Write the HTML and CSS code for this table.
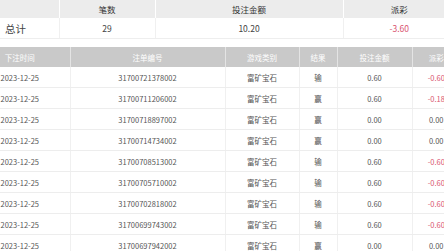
FILE: index.html
```html
<!DOCTYPE html>
<html lang="zh-CN">
<head>
<meta charset="utf-8">
<title>投注记录</title>
<link rel="stylesheet" href="styles.css">
</head>
<body>
<div class="page">
  <table class="summary">
    <colgroup><col class="s1"><col class="s2"><col class="s3"><col class="s4"></colgroup>
    <thead>
      <tr><th></th><th>笔数</th><th>投注金额</th><th>派彩</th></tr>
    </thead>
    <tbody>
      <tr><td class="label">总计</td><td>29</td><td>10.20</td><td class="neg">-3.60</td></tr>
    </tbody>
  </table>
  <div class="scroller">
    <table class="records">
      <colgroup><col class="c1"><col class="c2"><col class="c3"><col class="c4"><col class="c5"><col class="c6"></colgroup>
      <thead>
        <tr><th>下注时间</th><th>注单编号</th><th>游戏类别</th><th>结果</th><th>投注金额</th><th>派彩</th></tr>
      </thead>
      <tbody>
        <tr><td>2023-12-25</td><td>31700721378002</td><td>富矿宝石</td><td>输</td><td>0.60</td><td class="neg">-0.60</td></tr>
        <tr><td>2023-12-25</td><td>31700711206002</td><td>富矿宝石</td><td>赢</td><td>0.60</td><td class="neg">-0.18</td></tr>
        <tr><td>2023-12-25</td><td>31700718897002</td><td>富矿宝石</td><td>赢</td><td>0.00</td><td>0.00</td></tr>
        <tr><td>2023-12-25</td><td>31700714734002</td><td>富矿宝石</td><td>赢</td><td>0.00</td><td>0.00</td></tr>
        <tr><td>2023-12-25</td><td>31700708513002</td><td>富矿宝石</td><td>输</td><td>0.60</td><td class="neg">-0.60</td></tr>
        <tr><td>2023-12-25</td><td>31700705710002</td><td>富矿宝石</td><td>输</td><td>0.60</td><td class="neg">-0.60</td></tr>
        <tr><td>2023-12-25</td><td>31700702818002</td><td>富矿宝石</td><td>输</td><td>0.60</td><td class="neg">-0.60</td></tr>
        <tr><td>2023-12-25</td><td>31700699743002</td><td>富矿宝石</td><td>输</td><td>0.60</td><td class="neg">-0.60</td></tr>
        <tr><td>2023-12-25</td><td>31700697942002</td><td>富矿宝石</td><td>赢</td><td>0.00</td><td>0.00</td></tr>
      </tbody>
    </table>
  </div>
</div>
</body>
</html>
```

FILE: styles.css
```css
html, body {
  margin: 0;
  padding: 0;
  background: #ffffff;
  overflow: hidden;
}
body {
  font-family: "Noto Sans CJK SC", "Noto Sans", sans-serif;
  color: #555555;
}
.page {
  width: 444px;
  height: 251px;
  overflow: hidden;
}
table {
  border-collapse: collapse;
  table-layout: fixed;
}
th, td {
  padding: 0;
  text-align: center;
  white-space: nowrap;
  overflow: hidden;
}

/* summary */
.summary {
  width: 455px;
  font-size: 8.5px;
}
.summary .s1 { width: 59px; }
.summary .s2 { width: 96px; }
.summary .s3 { width: 188px; }
.summary .s4 { width: 112px; }
.summary th {
  height: 18px;
  background: #ececec;
  color: #333333;
  font-weight: normal;
  border-left: 1px solid #ffffff;
}
.summary th:first-child { border-left: none; }
.summary td {
  height: 20px;
  color: #444444;
  border-left: 1px solid #f0f0f0;
  border-bottom: 1px solid #eeeeee;
}
.summary td:first-child { border-left: none; }
.summary td.label {
  text-align: left;
  padding-left: 5px;
  font-size: 10.5px;
}

/* records */
.scroller {
  margin-top: 8px;
  overflow: hidden;
  width: 444px;
}
.records {
  width: 490px;
  margin-left: -30px;
  font-size: 7.5px;
}
.records .c1 { width: 100px; }
.records .c2 { width: 155px; }
.records .c3 { width: 74px; }
.records .c4 { width: 38px; }
.records .c5 { width: 75px; }
.records .c6 { width: 48px; }
.records th {
  height: 20px;
  background: #c9c9c9;
  color: #ffffff;
  font-weight: normal;
  border-left: 1px solid #e4e4e4;
}
.records th:first-child { border-left: none; }
.records td {
  height: 20px;
  color: #555555;
  border-left: 1px solid #f0f0f0;
  border-bottom: 1px solid #ededed;
}
.records td:first-child { border-left: none; }

.neg { color: #d9546f !important; }
```
